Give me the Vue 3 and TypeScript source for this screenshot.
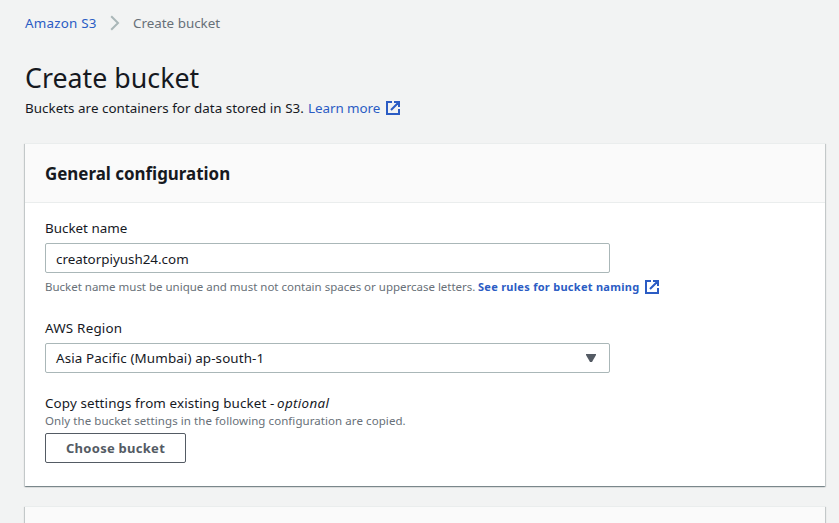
<script setup lang="ts">
import { ref } from 'vue'

const bucketName = ref('creatorpiyush24.com')
const region = ref('Asia Pacific (Mumbai) ap-south-1')
</script>

<template>
  <main class="page">
    <nav class="crumbs">
      <a class="crumb-link">Amazon S3</a>
      <svg class="chevron" width="10" height="16" viewBox="0 0 10 16"><path d="M1.2 1.2 8 8 1.2 14.8" fill="none" stroke="#aab7b8" stroke-width="2" /></svg>
      <span class="crumb-current">Create bucket</span>
    </nav>

    <h1 class="title">Create bucket</h1>
    <p class="intro">
      <span class="intro-text">Buckets are containers for data stored in S3.</span>
      <a class="learn">Learn more</a>
      <svg class="external" width="14" height="14" viewBox="0 0 14 14"><path d="M6 1H1v12h12V8M8 1h5v5M12.8 1.2 5 9" /></svg>
    </p>

    <section class="card">
      <header class="card-head"><h2 class="heading">General configuration</h2></header>
      <div class="card-body">
        <label class="label name-label">Bucket name</label>
        <div class="control"><span class="name-value">{{ bucketName }}</span></div>
        <p class="hint rules">
          <span class="rules-text">Bucket name must be unique and must not contain spaces or uppercase letters.</span>
          <a class="rules-link">See rules for bucket naming</a>
          <svg class="external" width="14" height="14" viewBox="0 0 14 14"><path d="M6 1H1v12h12V8M8 1h5v5M12.8 1.2 5 9" /></svg>
        </p>

        <label class="label region-label">AWS Region</label>
        <div class="control">
          <span class="region-value">{{ region }}</span>
          <svg class="caret" width="10" height="8" viewBox="0 0 10 8"><path d="M0 0h10v1L6 8H4L0 1z" fill="#545b64" /></svg>
        </div>

        <div class="label copy-label"><span class="copy-text">Copy settings from existing bucket - </span><em class="optional">optional</em></div>
        <p class="hint copy-hint">Only the bucket settings in the following configuration are copied.</p>
        <button class="choose" type="button"><span class="choose-text">Choose bucket</span></button>
      </div>
    </section>

    <section class="card next"><header class="card-head"></header></section>
  </main>
</template>

<style>
body {
  background: #f2f3f3;
  overflow: hidden;
}
</style>

<style scoped>
.page {
  box-sizing: border-box;
  width: 839px;
  height: 523px;
  overflow: hidden;
  padding: 13px 14px 0 25px;
  background: #f2f3f3;
  color: #16191f;
  font-family: "Noto Sans", sans-serif;
  font-size: 13.4px;
  line-height: 20px;
  white-space: nowrap;
}
h1, h2, p { margin: 0; }
a { color: #2b5cc4; }
.crumbs { display: flex; align-items: center; height: 20px; }
.crumb-link { width: 85px; letter-spacing: 0.2px; }
.chevron { margin-right: 13px; }
.crumb-current { color: #687078; }
.title {
  margin-top: 26px;
  height: 36px;
  font-size: 28px;
  line-height: 36px;
  font-weight: 400;
  transform: scaleX(0.956);
  transform-origin: left;
}
.intro { display: flex; align-items: center; height: 20px; margin-top: 3px; }
.intro-text { width: 283px; letter-spacing: 0.03px; }
.learn { width: 78px; letter-spacing: -0.05px; }
.external { flex: none; fill: none; stroke: #2b5cc4; stroke-width: 2; }
.card {
  box-sizing: border-box;
  width: 800px;
  height: 343px;
  margin-top: 25px;
  border-top: 1px solid #eaeded;
  background: #fff;
  box-shadow: 0 1px 1px 0 rgba(0, 28, 36, 0.3), 1px 1px 1px 0 rgba(0, 28, 36, 0.15), -1px 1px 1px 0 rgba(0, 28, 36, 0.15);
}
.card.next { margin-top: 20px; }
.card-head {
  box-sizing: border-box;
  height: 59px;
  padding: 18px 20px 0;
  border-bottom: 1px solid #eaeded;
  background: #fafafa;
}
.heading {
  font-size: 18px;
  line-height: 22px;
  font-weight: 700;
  transform: scaleX(0.94);
  transform-origin: left;
}
.card-body { padding: 15px 20px 0; }
.label { display: block; height: 20px; }
.control {
  box-sizing: border-box;
  display: flex;
  align-items: center;
  justify-content: space-between;
  width: 565px;
  height: 30px;
  margin-top: 5px;
  padding: 0 13px 0 10px;
  border: 1px solid #aab7b8;
  border-radius: 2px;
}
.name-value { padding-top: 2px; }
.region-value { letter-spacing: 0.12px; }
.hint { color: #687078; font-size: 11.5px; line-height: 16px; height: 16px; }
.rules { display: flex; align-items: center; margin-top: 6px; }
.rules-text { width: 433px; letter-spacing: -0.01px; }
.rules-link { width: 167px; font-size: 11px; font-weight: 700; letter-spacing: 0.28px; }
.region-label { margin-top: 23px; letter-spacing: 0.2px; }
.copy-label { margin-top: 20px; }
.copy-text { display: inline-block; width: 232px; letter-spacing: 0.12px; }
.optional { letter-spacing: 0.35px; }
.copy-hint { letter-spacing: 0.07px; }
.choose {
  display: block;
  box-sizing: border-box;
  width: 141px;
  height: 30px;
  margin-top: 4px;
  padding: 0 20px;
  border: 1px solid #545b64;
  border-radius: 2px;
  background: #fff;
  color: #545b64;
  font: 700 13px/20px "Noto Sans", sans-serif;
  letter-spacing: 0.27px;
  text-align: left;
}
</style>
